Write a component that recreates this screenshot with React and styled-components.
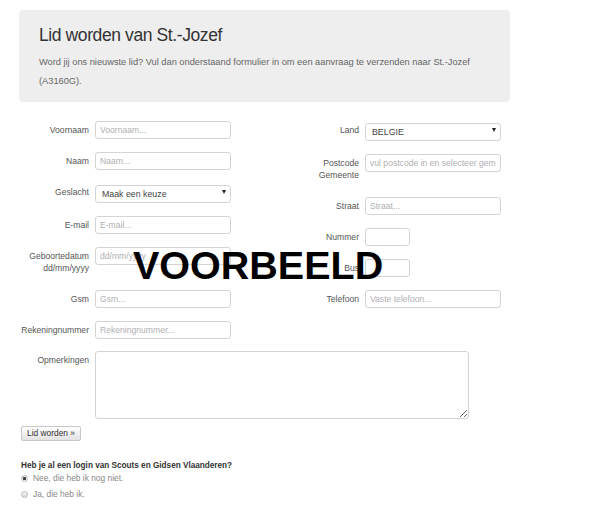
import React from 'react';
import styled, { createGlobalStyle } from 'styled-components';

const GlobalStyle = createGlobalStyle`
  html, body {
    margin: 0;
    padding: 0;
    background: #fff;
  }
  body {
    font-family: "Liberation Sans", Arial, sans-serif;
    color: #333;
  }
`;

const Page = styled.div`
  position: relative;
  width: 600px;
  height: 512px;
  padding: 10px 90px 0 19px;
  box-sizing: border-box;
  overflow: hidden;
`;

const Jumbotron = styled.div`
  background: #eeeeee;
  border-radius: 4px;
  padding: 14px 20px 12px 20px;
  height: 92px;
  box-sizing: border-box;
`;

const Title = styled.h1`
  margin: 0 0 7px 0;
  font-size: 17.5px;
  line-height: 22px;
  font-weight: normal;
  letter-spacing: -0.4px;
  color: #333;
`;

const Lead = styled.p`
  margin: 0;
  font-size: 9.25px;
  line-height: 19px;
  color: #666;
`;

const Form = styled.form`
  margin-top: 19px;
`;

const Columns = styled.div`
  display: grid;
  grid-template-columns: 211px 211px;
  column-gap: 59px;
  margin-left: 1px;
`;

const Column = styled.div`
  display: flex;
  flex-direction: column;
  gap: 13px;
`;

const Row = styled.div`
  display: grid;
  grid-template-columns: 69px ${p => p.$field || '136px'};
  column-gap: 6px;
  align-items: start;
`;

const Label = styled.label`
  text-align: right;
  font-size: 8.6px;
  line-height: 12px;
  padding: 3px 0;
  color: #555;
  white-space: nowrap;
`;

const Input = styled.input`
  box-sizing: border-box;
  width: 100%;
  height: 18px;
  margin: 0;
  padding: 0 4px;
  border: 1px solid #d4d4d4;
  border-radius: 3px;
  font-family: "Liberation Sans", Arial, sans-serif;
  font-size: 8.6px;
  color: #555;
  background: #fff;
  outline: none;
  &::placeholder {
    color: #b0b0b0;
  }
`;

const SelectBox = styled.div`
  position: relative;
  width: 100%;
  &::after {
    content: '';
    position: absolute;
    right: 5px;
    top: 7px;
    border-left: 2.5px solid transparent;
    border-right: 2.5px solid transparent;
    border-top: 4px solid #222;
  }
`;

const Select = styled.select`
  appearance: none;
  -webkit-appearance: none;
  box-sizing: border-box;
  width: 100%;
  height: 18px;
  margin: 0;
  padding: 0 6px;
  border: 1px solid #d4d4d4;
  border-radius: 3px;
  font-family: "Liberation Sans", Arial, sans-serif;
  font-size: 8.8px;
  color: #444;
  background: #fff;
  outline: none;
`;

const TextArea = styled.textarea`
  box-sizing: border-box;
  width: 374px;
  height: 68px;
  margin: 0;
  padding: 3px 4px;
  border: 1px solid #d4d4d4;
  border-radius: 3px;
  font-family: "Liberation Sans", Arial, sans-serif;
  font-size: 9px;
  outline: none;
`;

const CommentsRow = styled(Row)`
  margin-top: 12px;
  margin-left: 1px;
`;

const SubmitButton = styled.button`
  display: block;
  margin: 7px 0 0 2px;
  height: 15px;
  padding: 0 5px;
  border: 1px solid #c8c8c8;
  border-radius: 2px;
  background: linear-gradient(#ffffff, #e2e2e2);
  font-family: "Liberation Sans", Arial, sans-serif;
  font-size: 8.4px;
  line-height: 13px;
  color: #333;
`;

const Question = styled.div`
  margin: 19px 0 0 2px;
  font-size: 8.2px;
  font-weight: bold;
  color: #333;
  line-height: 12px;
`;

const RadioList = styled.div`
  display: flex;
  flex-direction: column;
  margin-left: 2px;
  gap: 4px;
`;

const RadioRow = styled.label`
  display: flex;
  align-items: center;
  gap: 5px;
  font-size: 8.4px;
  line-height: 12px;
  color: #888;
`;

const RadioDot = styled.span`
  box-sizing: border-box;
  width: 7px;
  height: 7px;
  border-radius: 50%;
  border: 1px solid #bbb;
  background: ${p => (p.$checked ? 'radial-gradient(circle, #444 0 1.4px, #eee 1.8px)' : 'linear-gradient(#f4f4f4, #dcdcdc)')};
`;

const Watermark = styled.div`
  position: absolute;
  left: 133px;
  top: 246px;
  font-family: "Liberation Sans", Arial, sans-serif;
  font-weight: bold;
  font-size: 39.5px;
  line-height: 39px;
  color: #000;
  pointer-events: none;
`;

const Field = ({ label, children, field }) => (
  <Row $field={field}>
    <Label>{label}</Label>
    {children}
  </Row>
);

export default function App() {
  return (
    <>
      <GlobalStyle />
      <Page>
        <Jumbotron>
          <Title>Lid worden van St.-Jozef</Title>
          <Lead>
            Word jij ons nieuwste lid? Vul dan onderstaand formulier in om een aanvraag te verzenden naar St.-Jozef
            <br />
            (A3160G).
          </Lead>
        </Jumbotron>

        <Form>
          <Columns>
            <Column>
              <Field label="Voornaam">
                <Input placeholder="Voornaam..." />
              </Field>
              <Field label="Naam">
                <Input placeholder="Naam..." />
              </Field>
              <Field label="Geslacht">
                <SelectBox>
                  <Select defaultValue="">
                    <option value="">Maak een keuze</option>
                    <option value="m">Man</option>
                    <option value="v">Vrouw</option>
                  </Select>
                </SelectBox>
              </Field>
              <Field label="E-mail">
                <Input placeholder="E-mail..." />
              </Field>
              <Field label={<>Geboortedatum<br />dd/mm/yyyy</>}>
                <Input placeholder="dd/mm/yyyy" />
              </Field>
              <Field label="Gsm">
                <Input placeholder="Gsm..." />
              </Field>
              <Field label="Rekeningnummer">
                <Input placeholder="Rekeningnummer..." />
              </Field>
            </Column>

            <Column>
              <Field label="Land">
                <SelectBox>
                  <Select defaultValue="BE">
                    <option value="BE">BELGIE</option>
                  </Select>
                </SelectBox>
              </Field>
              <Field label={<>Postcode<br />Gemeente</>}>
                <Input placeholder="vul postcode in en selecteer gemeente" />
              </Field>
              <Field label="Straat">
                <Input placeholder="Straat..." />
              </Field>
              <Field label="Nummer" field="45px">
                <Input />
              </Field>
              <Field label="Bus" field="45px">
                <Input />
              </Field>
              <Field label="Telefoon">
                <Input placeholder="Vaste telefoon..." />
              </Field>
            </Column>
          </Columns>

          <CommentsRow $field="374px">
            <Label>Opmerkingen</Label>
            <TextArea />
          </CommentsRow>

          <SubmitButton type="button">Lid worden »</SubmitButton>

          <Question>Heb je al een login van Scouts en Gidsen Vlaanderen?</Question>
          <RadioList>
            <RadioRow>
              <RadioDot $checked />
              Nee, die heb ik nog niet.
            </RadioRow>
            <RadioRow>
              <RadioDot />
              Ja, die heb ik.
            </RadioRow>
          </RadioList>
        </Form>

        <Watermark>VOORBEELD</Watermark>
      </Page>
    </>
  );
}
